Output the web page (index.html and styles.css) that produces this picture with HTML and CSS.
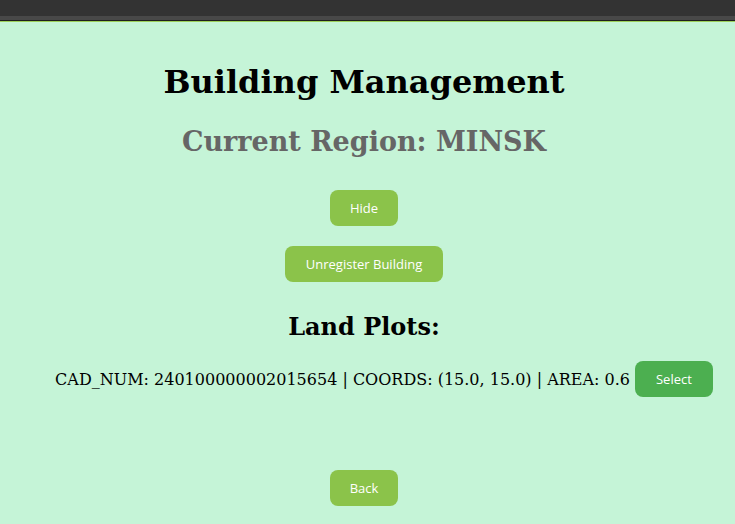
FILE: index.html
```html
<!DOCTYPE html>
<html>
<head>
<meta charset="utf-8">
<link rel="stylesheet" href="styles.css">
</head>
<body>
<div class="chrome"><div class="chrome-top"></div><div class="chrome-mid"></div><div class="chrome-dark"></div><div class="chrome-accent"></div></div>
<main class="page">
  <h1 class="title">Building Management</h1>
  <h2 class="region">Current Region: MINSK</h2>
  <button class="btn btn-small">Hide</button>
  <button class="btn btn-wide">Unregister Building</button>
  <h2 class="section">Land Plots:</h2>
  <ul class="plots">
    <li class="plot"><span class="plot-text">CAD_NUM: 240100000002015654 | COORDS: (15.0, 15.0) | AREA: 0.6</span><button class="btn btn-select">Select</button></li>
  </ul>
  <button class="btn btn-small btn-back">Back</button>
</main>
</body>
</html>
```
FILE: styles.css
```css
html, body {
  margin: 0;
  padding: 0;
  background: #c5f4d7;
  height: 100%;
}
body {
  font-family: "DejaVu Serif", serif;
}
.chrome-top { height: 16px; background: #333333; }
.chrome-mid { height: 4px; background: #484848; }
.chrome-dark { height: 1px; background: #1e1e1e; }
.chrome-accent { height: 1px; background: #9ccf5a; }
.page {
  display: flex;
  flex-direction: column;
  align-items: center;
  padding-right: 7px;
}
.title {
  margin: 40px 0 0;
  font-size: 32px;
  line-height: 40px;
  font-weight: bold;
  color: #000;
}
.region {
  margin: 22px 0 0;
  font-size: 27px;
  line-height: 36px;
  font-weight: bold;
  color: #666666;
}
.btn {
  font-family: "Open Sans", sans-serif;
  font-size: 13px;
  color: #ffffff;
  background: #8bc34a;
  border: none;
  border-radius: 8px;
  height: 36px;
  padding: 0;
  cursor: pointer;
}
.btn-small { width: 68px; margin-top: 30px; }
.btn-wide { width: 158px; margin-top: 20px; }
.section {
  margin: 30px 0 0;
  font-size: 24px;
  line-height: 30px;
  font-weight: bold;
  color: #000;
}
.plots {
  list-style: none;
  margin: 19px 0 0;
  padding: 0 0 0 40px;
}
.plot {
  display: flex;
  align-items: center;
  gap: 5px;
  font-size: 16px;
  color: #000;
}
.btn-select {
  width: 78px;
  background: #4caf50;
}
.btn.btn-back { margin-top: 73px; }
```
